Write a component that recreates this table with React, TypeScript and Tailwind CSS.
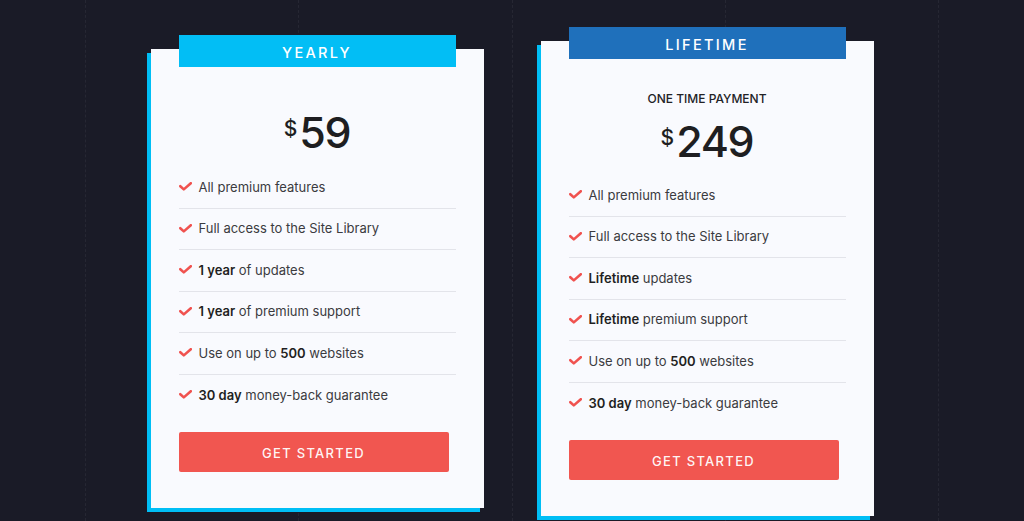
import type { ReactNode } from "react"

type Feature = { content: ReactNode }

const yearly: Feature[] = [
  { content: "All premium features" },
  { content: "Full access to the Site Library" },
  { content: <><b className="font-semibold text-[#1f1f22]">1 year</b> of updates</> },
  { content: <><b className="font-semibold text-[#1f1f22]">1 year</b> of premium support</> },
  { content: <>Use on up to <b className="font-semibold text-[#1f1f22]">500</b> websites</> },
  { content: <><b className="font-semibold text-[#1f1f22]">30 day</b> money-back guarantee</> },
]

const lifetime: Feature[] = [
  { content: "All premium features" },
  { content: "Full access to the Site Library" },
  { content: <><b className="font-semibold text-[#1f1f22]">Lifetime</b> updates</> },
  { content: <><b className="font-semibold text-[#1f1f22]">Lifetime</b> premium support</> },
  { content: <>Use on up to <b className="font-semibold text-[#1f1f22]">500</b> websites</> },
  { content: <><b className="font-semibold text-[#1f1f22]">30 day</b> money-back guarantee</> },
]

function Check() {
  return (
    <svg width="13" height="9" viewBox="0 0 13 9" className="shrink-0 -mt-[2px]">
      <polyline
        points="1.3,4.2 4.8,7.4 11.8,1.2"
        fill="none"
        stroke="#f0524f"
        strokeWidth="2.6"
        strokeLinecap="round"
        strokeLinejoin="round"
      />
    </svg>
  )
}

function PlanCard({
  label,
  badgeClass,
  price,
  subtitle,
  features,
}: {
  label: string
  badgeClass: string
  price: string
  subtitle?: string
  features: Feature[]
}) {
  return (
    <div className="w-[333px] bg-[#f9fafe] px-7 pb-9 shadow-[-4px_4px_0_#00bef5]">
      {/* plan badge sticks out over the card top */}
      <div
        className={`-mt-[14px] h-8 pt-[3px] flex items-center justify-center text-white text-[14.5px] font-medium tracking-[0.16em] ${badgeClass}`}
      >
        {label}
      </div>

      {subtitle ? (
        <div className="mt-8 text-center text-[12px] leading-4 font-medium text-[#222226]">{subtitle}</div>
      ) : null}

      <div className={`flex justify-center text-[#1e1e21] ${subtitle ? "mt-3" : "mt-[43px]"}`}>
        <span className="text-[21px] leading-none mt-[8px] mr-[2px] font-medium">$</span>
        <span className="text-[43px] leading-[44px] font-medium tracking-[-0.03em]">{price}</span>
      </div>

      <ul className={subtitle ? "mt-3" : "mt-[13px]"}>
        {features.map((f, i) => (
          <li
            key={i}
            className={`h-[41.5px] flex items-center gap-[7px] text-[13px] text-[#3b3b40] ${
              i < features.length - 1 ? "border-b border-[#e3e4ea]" : ""
            }`}
          >
            <Check />
            <span>{f.content}</span>
          </li>
        ))}
      </ul>

      <button className="mt-[15.5px] w-[270px] h-10 pt-[3px] rounded-[2px] bg-[#f15650] text-white/95 text-[13px] font-medium tracking-[0.1em]">
        GET STARTED
      </button>
    </div>
  )
}

export default function App() {
  return (
    <div
      className="relative h-[521px] w-full overflow-hidden bg-[#1a1b27]"
      style={{ fontFamily: "Inter, 'Noto Sans', sans-serif" }}
    >
      {/* faint column guides in the backdrop */}
      <div className="absolute inset-0 flex justify-center pointer-events-none">
        <div className="w-[854px] h-full grid grid-cols-4 border-r border-dashed border-[#262733]">
          <div className="border-l border-dashed border-[#262733]" />
          <div className="border-l border-dashed border-[#262733]" />
          <div className="border-l border-dashed border-[#262733]" />
          <div className="border-l border-dashed border-[#262733]" />
        </div>
      </div>

      <div className="relative h-full pt-9 flex items-center justify-center gap-[57px]">
        <PlanCard label="YEARLY" badgeClass="bg-[#02bef5]" price="59" features={yearly} />
        <PlanCard
          label="LIFETIME"
          badgeClass="bg-[#1f70bb]"
          price="249"
          subtitle="ONE TIME PAYMENT"
          features={lifetime}
        />
      </div>
    </div>
  )
}
